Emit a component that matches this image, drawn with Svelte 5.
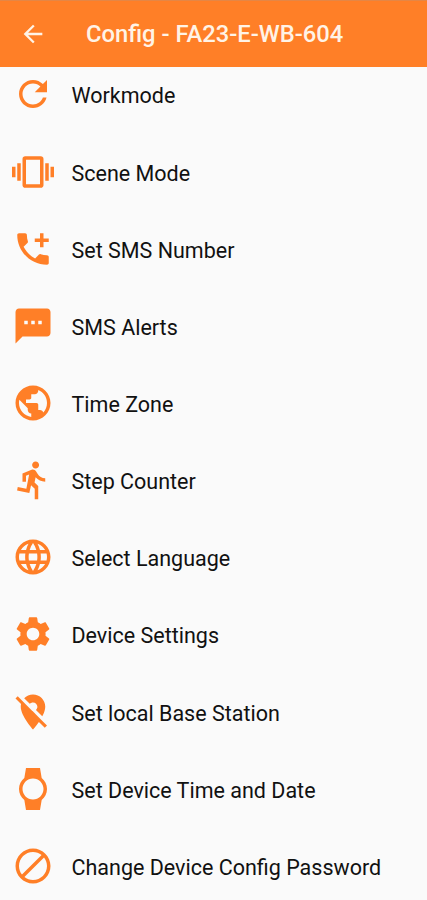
<script>
    const title = 'Config - FA23-E-WB-604';

    const items = [
        {
            label: 'Workmode',
            icon: 'M17.65 6.35C16.2 4.9 14.21 4 12 4c-4.42 0-7.99 3.58-7.99 8s3.57 8 7.99 8c3.73 0 6.84-2.55 7.73-6h-2.08c-.82 2.33-3.04 4-5.65 4-3.31 0-6-2.69-6-6s2.69-6 6-6c1.66 0 3.14.69 4.22 1.78L13 11h7V4l-2.35 2.35z'
        },
        {
            label: 'Scene Mode',
            icon: 'M0 15h2V9H0v6zm3 2h2V7H3v10zm19-8v6h2V9h-2zm-3 8h2V7h-2v10zM16.5 3h-9C6.67 3 6 3.67 6 4.5v15c0 .83.67 1.5 1.5 1.5h9c.83 0 1.5-.67 1.5-1.5v-15c0-.83-.67-1.5-1.5-1.5zM16 19H8V5h8v14z'
        },
        {
            label: 'Set SMS Number',
            icon: 'M20 15.5c-1.25 0-2.45-.2-3.57-.57-.35-.11-.74-.03-1.02.24l-2.2 2.2c-2.83-1.44-5.15-3.75-6.59-6.59l2.2-2.21c.28-.26.36-.65.25-1C8.7 6.45 8.5 5.25 8.5 4c0-.55-.45-1-1-1H4c-.55 0-1 .45-1 1 0 9.39 7.61 17 17 17 .55 0 1-.45 1-1v-3.5c0-.55-.45-1-1-1zM21 6h-3V3h-2v3h-3v2h3v3h2V8h3z'
        },
        {
            label: 'SMS Alerts',
            icon: 'M20 2H4c-1.1 0-1.99.9-1.99 2L2 22l4-4h14c1.1 0 2-.9 2-2V4c0-1.1-.9-2-2-2zM9 11H7V9h2v2zm4 0h-2V9h2v2zm4 0h-2V9h2v2z'
        },
        {
            label: 'Time Zone',
            icon: 'M12 2C6.48 2 2 6.48 2 12s4.48 10 10 10 10-4.48 10-10S17.52 2 12 2zm-1 17.93c-3.95-.49-7-3.85-7-7.93 0-.62.08-1.21.21-1.79L9 15v1c0 1.1.9 2 2 2v1.93zm6.9-2.54c-.26-.81-1-1.39-1.9-1.39h-1v-3c0-.55-.45-1-1-1H8v-2h2c.55 0 1-.45 1-1V7h2c1.1 0 2-.9 2-2v-.41c2.93 1.19 5 4.06 5 7.41 0 2.08-.8 3.97-2.1 5.39z'
        },
        {
            label: 'Step Counter',
            icon: 'M13.49 5.48c1.1 0 2-.9 2-2s-.9-2-2-2-2 .9-2 2 .9 2 2 2zm-3.6 13.9l1-4.4 2.1 2v6h2v-7.5l-2.1-2 .6-3c1.3 1.5 3.3 2.5 5.5 2.5v-2c-1.9 0-3.5-1-4.3-2.4l-1-1.6c-.4-.6-1-1-1.7-1-.3 0-.5.1-.8.1l-5.2 2.2v4.7h2v-3.4l1.8-.7-1.6 8.1-4.9-1-.4 2 7 1.4z'
        },
        {
            label: 'Select Language',
            icon: 'M11.99 2C6.47 2 2 6.48 2 12s4.47 10 9.99 10C17.52 22 22 17.52 22 12S17.52 2 11.99 2zm6.93 6h-2.95c-.32-1.25-.78-2.45-1.38-3.56 1.84.63 3.37 1.91 4.33 3.56zM12 4.04c.83 1.2 1.48 2.53 1.91 3.96h-3.82c.43-1.43 1.08-2.76 1.91-3.96zM4.26 14C4.1 13.36 4 12.69 4 12s.1-1.36.26-2h3.38c-.08.66-.14 1.32-.14 2s.06 1.34.14 2H4.26zm.82 2h2.95c.32 1.25.78 2.45 1.38 3.56-1.84-.63-3.37-1.9-4.33-3.56zm2.95-8H5.08c.96-1.66 2.49-2.93 4.33-3.56C8.81 5.55 8.35 6.75 8.03 8zM12 19.96c-.83-1.2-1.48-2.53-1.91-3.96h3.82c-.43 1.43-1.08 2.76-1.91 3.96zM14.34 14H9.66c-.09-.66-.16-1.32-.16-2s.07-1.35.16-2h4.68c.09.65.16 1.32.16 2s-.07 1.34-.16 2zm.25 5.56c.6-1.11 1.06-2.31 1.38-3.56h2.95c-.96 1.65-2.49 2.93-4.33 3.56zM16.36 14c.08-.66.14-1.32.14-2s-.06-1.34-.14-2h3.38c.16.64.26 1.31.26 2s-.1 1.36-.26 2h-3.38z'
        },
        {
            label: 'Device Settings',
            icon: 'M19.14 12.94c.04-.3.06-.61.06-.94 0-.32-.02-.64-.07-.94l2.03-1.58c.18-.14.23-.41.12-.61l-1.92-3.32c-.12-.22-.37-.29-.59-.22l-2.39.96c-.5-.38-1.03-.7-1.62-.94l-.36-2.54c-.04-.24-.24-.41-.48-.41h-3.84c-.24 0-.43.17-.47.41l-.36 2.54c-.59.24-1.13.57-1.62.94l-2.39-.96c-.22-.08-.47 0-.59.22L2.74 8.87c-.12.21-.08.47.12.61l2.03 1.58c-.05.3-.09.63-.09.94s.02.64.07.94l-2.03 1.58c-.18.14-.23.41-.12.61l1.92 3.32c.12.22.37.29.59.22l2.39-.96c.5.38 1.03.7 1.62.94l.36 2.54c.05.24.24.41.48.41h3.84c.24 0 .44-.17.47-.41l.36-2.54c.59-.24 1.13-.56 1.62-.94l2.39.96c.22.08.47 0 .59-.22l1.92-3.32c.12-.22.07-.47-.12-.61l-2.01-1.58zM12 15.6c-1.98 0-3.6-1.62-3.6-3.6s1.62-3.6 3.6-3.6 3.6 1.62 3.6 3.6-1.62 3.6-3.6 3.6z'
        },
        {
            label: 'Set local Base Station',
            icon: 'M12 6.5c1.38 0 2.5 1.12 2.5 2.5 0 .74-.33 1.39-.83 1.85l3.63 3.63c.98-1.86 1.7-3.8 1.7-5.48 0-3.87-3.13-7-7-7-1.98 0-3.76.83-5.04 2.15l3.19 3.19c.46-.52 1.11-.84 1.85-.84zm4.37 9.6l-4.63-4.63-.11-.11L3.27 3 2 4.27l3.18 3.18C5.07 7.95 5 8.47 5 9c0 5.25 7 13 7 13s1.67-1.85 3.38-4.35L18.73 21 20 19.73l-3.63-3.63z'
        },
        {
            label: 'Set Device Time and Date',
            icon: 'M20 12c0-2.54-1.19-4.81-3.04-6.27L16 0H8l-.95 5.73C5.19 7.19 4 9.45 4 12s1.19 4.81 3.05 6.27L8 24h8l.96-5.73C18.81 16.81 20 14.54 20 12zM6 12c0-3.31 2.69-6 6-6s6 2.69 6 6-2.69 6-6 6-6-2.69-6-6z'
        },
        {
            label: 'Change Device Config Password',
            icon: 'M12 2C6.5 2 2 6.5 2 12s4.5 10 10 10 10-4.5 10-10S17.5 2 12 2zM4 12c0-4.4 3.6-8 8-8 1.8 0 3.5.6 4.9 1.7L5.7 16.9C4.6 15.5 4 13.8 4 12zm8 8c-1.8 0-3.5-.6-4.9-1.7L18.3 7.1C19.4 8.5 20 10.2 20 12c0 4.4-3.6 8-8 8z'
        }
    ];
</script>

<div class="screen">
    <header>
        <button class="back" aria-label="Back">
            <svg viewBox="0 0 24 24"><path d="M20 11H7.83l5.59-5.59L12 4l-8 8 8 8 1.41-1.41L7.83 13H20v-2z" /></svg>
        </button>
        <h1>{title}</h1>
    </header>

    <main>
        <ul>
            {#each items as item}
                <li>
                    <svg viewBox="0 0 24 24"><path d={item.icon} /></svg>
                    <span>{item.label}</span>
                </li>
            {/each}
        </ul>
    </main>
</div>

<style>
    :global(body) {
        margin: 0;
        background: #fafafa;
    }
    .screen {
        display: flex;
        flex-direction: column;
        height: 900px;
        overflow: hidden;
        font-family: Roboto, sans-serif;
        background: #fafafa;
    }
    header {
        flex: none;
        display: flex;
        align-items: center;
        box-sizing: border-box;
        height: 66.5px;
        padding: 0 0 0 19px;
        border-top: 1px solid #e58645;
        background: #ff7f27;
    }
    .back {
        display: flex;
        padding: 0;
        border: none;
        background: none;
        cursor: pointer;
    }
    .back svg {
        width: 28px;
        height: 28px;
        fill: #fff3e6;
    }
    h1 {
        margin: 0 0 0 39px;
        font-size: 23.75px;
        line-height: 28px;
        font-weight: 500;
        color: #fff3e6;
        white-space: nowrap;
    }
    main {
        flex: 1;
        min-height: 0;
        overflow: hidden;
    }
    /* list is scrolled slightly under the header */
    ul {
        list-style: none;
        margin: -10.6px 0 0;
        padding: 0;
    }
    li {
        display: flex;
        align-items: center;
        height: 77.15px;
        padding-left: 12px;
    }
    li svg {
        flex: none;
        width: 42px;
        height: 42px;
        fill: #ff7f27;
    }
    li span {
        margin-left: 17.5px;
        padding-top: 4px;
        font-size: 21.5px;
        line-height: 26px;
        color: #111;
        white-space: nowrap;
    }
</style>
